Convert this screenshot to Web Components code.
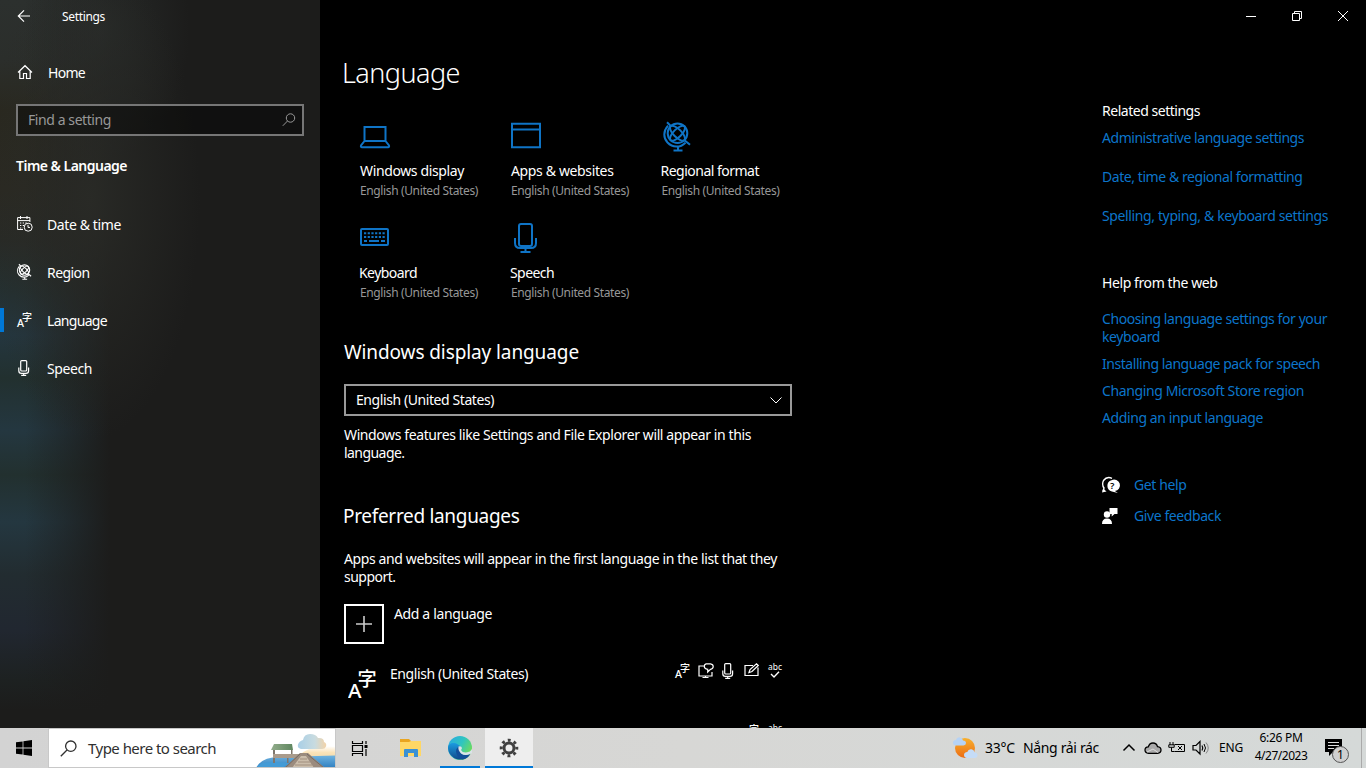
<!DOCTYPE html>
<html lang="en">
<head>
<meta charset="utf-8">
<title>Settings</title>
<style>
  html, body { margin: 0; height: 100%; overflow: hidden; background: #000; }
  body { font: 14px/18px "Noto Sans", "Liberation Sans", "Noto Sans CJK JP", sans-serif; color: #fff; }
</style>
</head>
<body>
<settings-desktop></settings-desktop>

<script>
const LANG = `<text x="0" y="15.2" font-size="10.5" font-weight="500" textLength="7" lengthAdjust="spacingAndGlyphs">A</text><text x="5" y="8.800" font-size="10" font-weight="500" font-family="Noto Sans CJK JP">字</text>`;
const MIC = `<rect x="4.5" y=".6" width="6" height="10.4" rx="1"/><path d="M2.6 7.5v3.2q0 2.6 2.6 2.6h4.6q2.6 0 2.6-2.6V7.5M7.5 13.3v2M5 15.3h5"/>`;
const GLOBE = `<circle cx="14.500" cy="11.500" r="9.800"/><g transform="rotate(45 14.500 11.500)"><ellipse cx="14.500" cy="11.500" rx="4" ry="9.800"/><ellipse cx="14.500" cy="11.500" rx="9.800" ry="4"/></g><path d="M4 .5l4 4M21.500 18.500l5.500 4.500M5 4C0 9.500 .3 16.500 4.500 20.800C9.500 26 17 26.500 22.500 21M15 25v3.500M10.500 28.800h9"/>`;

// name: [width, height, markup]
const ICONS = {
  back: [14, 14, `<path d="M13 7H1.500M7 1.300L1.300 7L7 12.700" stroke-width="1.200"/>`],
  home: [16, 16, `<path d="M1 8.500L8 1.700L15 8.500M2.800 7v7.500h3.700V9.500h3v5h3.700V7" stroke-width="1.200"/>`],
  search: [14, 14, `<circle cx="8.500" cy="5" r="4.200"/><path d="M5.500 8L.8 12.800"/>`],
  searchBig: [17, 17, `<circle cx="10.800" cy="6.200" r="5.200" stroke-width="1.300"/><path d="M7 10L.8 16.200" stroke-width="1.300"/>`],
  date: [16, 16, `<path d="M6 13.500H.6V1.600h12.300V6M.6 4.600h12.300M3.500 0v3M10 0v3"/><path d="M3 7h7.500M3 9.500h4M3 12h3" stroke-dasharray="1.300 1.400"/><circle cx="11.200" cy="11.200" r="4"/><path d="M11 8.800v2.600h2"/>`],
  region: [16, 16, `<g transform="translate(-.2 0) scale(.53)" stroke-width="2.200">${GLOBE}</g>`],
  lang: [16, 16, `<g fill="currentColor" stroke="none">${LANG}</g>`],
  mic: [16, 16, `<g transform="translate(-.8 0)" stroke-width="1.200">${MIC}</g>`],
  laptop: [30, 30, `<path d="M4.500 6h21v14h-21zM4.500 20L1 24.500q-.5 1.700 1 1.700h26q1.500 0 1-1.700L25.500 20" stroke-width="2"/>`],
  app: [30, 30, `<path d="M1 2.800h28v23.400H1zM1 8.500h28" stroke-width="2"/>`],
  globe: [30, 30, `<g transform="translate(1 .7)" stroke-width="2">${GLOBE}</g>`],
  keyboard: [30, 30, `<rect x="1" y="6" width="27" height="16" rx="1" stroke-width="2"/><path d="M4 10.300h21M4 14.100h21" stroke-width="2" stroke-dasharray="2.200 1.500"/><path d="M4 18h3M9 18h10M21 18h4" stroke-width="2"/>`],
  bigMic: [30, 31, `<rect x="8" y="1" width="13" height="22" rx="2" stroke-width="2"/><path d="M4 15v5q0 5 5 5h11q5 0 5-5v-5M14.500 25v4M9.500 29h10" stroke-width="2"/>`],
  chevron: [14, 14, `<path d="M1.500 4.500L7 10L12.500 4.500"/>`],
  plus: [18, 18, `<path d="M9 1v16M1 9h16" stroke-width="1.600" stroke="#ccc"/>`],
  display: [16, 16, `<path d="M6 3H1v10h13V9M4.500 14.500h6M7.500 13v2" stroke-width="1.200"/><path d="M8 .8h4.500q2.700.4 2.700 2.800t-2.700 2.800L9.700 9V6.400Q6.300 6 6.300 3.600T8 .8z" stroke-width="1.200"/>`],
  pen: [16, 16, `<path d="M9 2.500H1v10h13V4.500M5 9.500l1-3L12.500 .8l1.800 1.700L8 8.500z" stroke-width="1.200"/>`],
  abc: [16, 16, `<text x="1" y="6.800" font-size="9" textLength="14" lengthAdjust="spacingAndGlyphs" fill="currentColor" stroke="none">abc</text><path d="M4 11l3 3L12 8.800" stroke-width="1.400"/>`],
  help: [18, 18, `<path d="M1 15.500l1-3.500Q-.5 8.500 1.500 4.500Q4.800 0 10 2.300" stroke-width="1.400"/><path d="M9.500 4.200a5.800 5.800 0 1 1 3.400 10.900l3 2-6-1.700a5.800 5.800 0 0 1-.4-11.200z" fill="currentColor" stroke="none"/><path d="M1.200 12.500L0 16.400l4.500-1z" fill="currentColor" stroke="none"/><text x="8" y="12.800" font-size="9.500" font-weight="600" fill="#000" stroke="none">?</text>`],
  feedback: [18, 18, `<g fill="currentColor" stroke="none"><circle cx="5" cy="7.500" r="3.200"/><path d="M0 17q0-5.500 5-5.500t5 5.500zM7.500 1h8v6h-3l-2.800 2.600V7h-2.200z"/></g>`],
  min: [12, 12, `<path d="M1 6.500h10"/>`],
  restore: [12, 12, `<path d="M1.500 3.500h7v7h-7zM3.500 3.500v-2h7v7h-2"/>`],
  close: [12, 12, `<path d="M1 1l10 10M11 1L1 11"/>`],
  start: [16, 16, `<path d="M0 2.300L6.600 1.400V7.600H0zM7.400 1.200L16 0V7.600H7.400zM0 8.400H6.600V14.600L0 13.700zM7.400 8.400H16V16L7.400 14.800z" fill="#000" stroke="none"/>`],
  taskview: [17, 17, `<path d="M1.500 1v2.500h10V1M1.500 16v-2.500h10V16M1.500 5.500h10v6h-10zM15 1v3M15 9v7" stroke-width="1.200"/><path d="M13.500 5h3v3h-3z" fill="#000" stroke="none"/>`],
  folder: [22, 20, `<g stroke="none"><path d="M0 1h9l2 2h10v15H0z" fill="#e9a520"/><path d="M0 4h9l2-1h10v15H0z" fill="#ffd765"/><path d="M4 19v-7q0-1 1-1h12q1 0 1 1v7h-4v-4H8v4z" fill="#3b91d4"/></g>`],
  edge: [24, 24, `<defs><linearGradient id="e1" x2="1" y2=".6"><stop stop-color="#2aa7e4"/><stop offset=".55" stop-color="#2fc5c0"/><stop offset="1" stop-color="#70dd55"/></linearGradient><linearGradient id="e2" x2="0" y2="1"><stop stop-color="#1b9be0"/><stop offset="1" stop-color="#114a8b"/></linearGradient></defs><g stroke="none"><circle cx="12" cy="12" r="12" fill="url(#e1)"/><path d="M0 12C.5 6.500 6 6 10 8.500Q14 11 13 13c-3 .5-1.500 6 4 6q3 0 5.300-1.300A12 12 0 0 1 0 12z" fill="url(#e2)"/><path d="M12.500 10.500Q8 11 8 15.500q.5 6.500 7 8Q20 22.500 22.400 17.800q-5 2.500-8.500 0T12.500 10.500z" fill="#124f99"/><path d="M10.500 10.500q3-1.200 3.400 1.500.1 1-.9 2 1.300 2.700 5 2.500 4.500-.5 6-3.500v4l-1.700 1q-5.500 2.500-9.300-.6-3.200-3-2.500-6.900z" fill="#d9e4e8"/></g>`],
  gear: [20, 20, `<circle cx="10" cy="10" r="5" stroke-width="3"/><circle cx="10" cy="10" r="7.800" stroke-width="3" stroke-dasharray="2.900 3.226" stroke-dashoffset="1.450"/>`],
  weather: [26, 24, `<defs><linearGradient id="w1" x2="0" y2="1"><stop stop-color="#f8b02c"/><stop offset="1" stop-color="#ec6c14"/></linearGradient></defs><g stroke="none"><circle cx="12" cy="12" r="10" fill="url(#w1)"/><path d="M3 9.500q-3 0-3-2.700T3 4Q4 .8 7.200 1.500 9.500 2 10 4.500q3 .1 3 2.500T10.500 9.500z" fill="#b6d3f5"/><path d="M14 22q-3-.4-3-3t3.300-3q1-3.200 4.200-2.700 2.700.5 3 3.200 3 .3 3 2.800T21.500 22z" fill="#c5dcf7"/></g>`],
  up: [14, 14, `<path d="M1.500 9.500L7 4L12.500 9.500" stroke-width="1.500"/>`],
  cloud: [18, 14, `<path d="M4.500 12.300Q1 12 1 9t3.300-3.200Q5.500 2 9 2t4.500 3.600Q17 6 17 9t-3.400 3.300z" fill="#aaa" stroke-width="1.300"/><path d="M3 11l6-3 5 3.500" fill="none" stroke="#ddd"/>`],
  battery: [18, 16, `<path d="M6.500 4.500h10v7h-10M10 6l4 4M14 6l-4 4M2 2v3M5 2v3M.8 4.800h5.400v2.500H.8zM3.500 7.500v4h3" />`],
  sound: [18, 16, `<path d="M1 5.500h3l4-4v12.500l-4-4H1zM10 5.500q1.500 2.300 0 5" stroke-width="1.200"/><path d="M12 4q3 4 0 8" /><path d="M14 2.500q4.500 5.500 0 11" stroke="#888"/>`],
  notice: [26, 26, `<path d="M1 1h17v13H9l-4 4v-4H1z" fill="#000" stroke="none"/><path d="M4 4.500h11M4 7.500h11M4 10.500h6" stroke="#ddd"/><circle cx="16.500" cy="16.500" r="8" fill="#cfcfcf" stroke="#555"/><text x="16.500" y="20.700" text-anchor="middle" font-size="12" fill="#000" stroke="none">1</text>`],
  pier: [80, 38, `<defs><linearGradient id="p1" x2="0" y2="1"><stop stop-color="#fff"/><stop offset=".5" stop-color="#fbe3b8"/><stop offset="1" stop-color="#f3d9a8"/></linearGradient><linearGradient id="p2" x2="0" y2="1"><stop stop-color="#6fb3e0"/><stop offset="1" stop-color="#2f7fc0"/></linearGradient><linearGradient id="p3" x2="1"><stop stop-color="#a9cfe6"/><stop offset=".6" stop-color="#c8dbe0"/><stop offset="1" stop-color="#f3d3a8"/></linearGradient><linearGradient id="p4" x2="1"><stop stop-color="#92ac8b"/><stop offset="1" stop-color="#5f8760"/></linearGradient></defs><g stroke="none"><path d="M43 26q12-13 37-9v12H43z" fill="url(#p1)"/><path d="M0 38q6-12 26-11l54-1.500V38z" fill="url(#p2)"/><path d="M0 38q5-7 18-6l15 1-6 5z" fill="#439bd6"/><path d="M45 19q-4-1-3-4.500Q43 11 47 10q1-6 7-6t8 4q6-.5 6 4 3 1 2 4.500-1 2.500-4 2.500z" fill="url(#p3)"/><path d="M18 14h18l1 6H15z" fill="url(#p4)"/><path d="M17 20h2v13h-2zM35 20h1.500v5H35zM31 28h1.500v5H31z" fill="#7e766d"/><path d="M17 24h31v4H17z" fill="#a99b8c"/><path d="M44 23h8l17 15H28z" fill="#9b8b7e"/><path d="M45 26h5l8 12H36z" fill="#cbbdab"/></g><path d="M44 29h7M42 32h12M39 35h17" stroke="#a18f7e"/><path d="M44 24L29 38M51 24l17 14" stroke="#756b64"/>`],
};

class UiIcon extends HTMLElement {
  connectedCallback() {
    const [w, h, body] = ICONS[this.getAttribute('name')];
    this.attachShadow({ mode: 'open' }).innerHTML = `
      <style>
        :host { display: block; flex: none; width: ${w}px; height: ${h}px; }
        svg { display: block; overflow: visible; }
      </style>
      <svg width="${w}" height="${h}" viewBox="0 0 ${w} ${h}" fill="none" stroke="currentColor">${body}</svg>`;
  }
}
customElements.define('ui-icon', UiIcon);

// One line of text whose tracking is adjusted to fill the width in "w"
class FitText extends HTMLElement {
  connectedCallback() {
    this.attachShadow({ mode: 'open' }).innerHTML = `
      <style>
        :host { display: block; flex: none; white-space: nowrap; width: max-content; }
      </style>
      <span><slot></slot></span>`;
    const span = this.shadowRoot.querySelector('span');
    const gap = Number(this.getAttribute('w')) - span.getBoundingClientRect().width;
    span.style.letterSpacing = (gap / this.textContent.length).toFixed(3) + 'px';
  }
}
customElements.define('fit-text', FitText);

class NavItem extends HTMLElement {
  connectedCallback() {
    this.attachShadow({ mode: 'open' }).innerHTML = `
      <style>
        :host { display: flex; align-items: center; height: 48px; }
        i { width: 4px; height: 24px; margin: -2px 13px 0 0; }
        :host([selected]) i { background: #0078d7; }
        ui-icon { margin: -2px 14px 0 0; }
        :host([name="home"]) ui-icon { margin-right: 15px; }
      </style>
      <i></i><ui-icon name="${this.getAttribute('name')}"></ui-icon>
      <fit-text w="${this.getAttribute('w')}">${this.textContent}</fit-text>`;
  }
}
customElements.define('nav-item', NavItem);

class SideBar extends HTMLElement {
  connectedCallback() {
    this.attachShadow({ mode: 'open' }).innerHTML = `
      <style>
        :host {
          display: block; flex: none; width: 320px; height: 728px;
          background:
            radial-gradient(ellipse 110px 240px at 90px 200px, rgba(42,43,39,.9), rgba(42,43,39,0)),
            radial-gradient(ellipse 90px 130px at 100px 30px, rgba(44,48,46,.7), rgba(44,48,46,0)),
            linear-gradient(90deg, rgba(28,28,27,0) 25px, rgba(28,28,27,.45) 65px, #1c1c1b 110px),
            linear-gradient(#2c302e 0, #2b2e2b 60px, #29281f 110px, #2a2922 190px, #282a26 240px, #243031 290px,
              #24363f 335px, #22302f 378px, #243740 430px, #22302f 475px, #243740 522px, #222c30 575px,
              #212730 630px, #1d2121 680px, #1c1c1b 710px);
        }
        header { display: flex; align-items: center; height: 33px; padding-left: 17px; font-size: 12px; gap: 31px; }
        header ui-icon { margin-top: -2px; }
        nav-item[name="home"] { margin-top: 16px; }
        .find {
          display: flex; align-items: center; justify-content: space-between;
          box-sizing: border-box; width: 288px; height: 32px; margin: 7px 0 0 16px; padding: 0 6px 1px 10px;
          border: 2px solid #767676; background: rgba(0,0,0,.4); color: #989898;
        }
        .find ui-icon { margin-top: 1px; }
        h2 { margin: 21px 0 26px 16px; font-size: 14px; line-height: 18px; font-weight: 600; }
      </style>
      <header><ui-icon name="back"></ui-icon><fit-text w="43">Settings</fit-text></header>
      <nav-item name="home" w="37">Home</nav-item>
      <div class="find"><fit-text w="83">Find a setting</fit-text><ui-icon name="search"></ui-icon></div>
      <h2><fit-text w="111">Time &amp; Language</fit-text></h2>
      <nav>
        <nav-item name="date" w="74">Date &amp; time</nav-item>
        <nav-item name="region" w="42.500">Region</nav-item>
        <nav-item name="lang" w="60" selected>Language</nav-item>
        <nav-item name="mic" w="45">Speech</nav-item>
      </nav>`;
  }
}
customElements.define('side-bar', SideBar);

class FeatureTile extends HTMLElement {
  connectedCallback() {
    this.attachShadow({ mode: 'open' }).innerHTML = `
      <style>
        :host { display: block; height: 102px; }
        ui-icon { color: #0f74c6; height: 31px; margin-bottom: 10px; }
        :host([nudge]) .title { margin-left: -1px; }
        .sub { margin-top: 2px; font-size: 12px; line-height: 17px; color: #979797; }
      </style>
      <ui-icon name="${this.getAttribute('icon')}"></ui-icon>
      <fit-text class="title" w="${this.getAttribute('w')}">${this.textContent}</fit-text>
      <fit-text class="sub" w="118">English (United States)</fit-text>`;
  }
}
customElements.define('feature-tile', FeatureTile);

class LanguagePage extends HTMLElement {
  connectedCallback() {
    this.attachShadow({ mode: 'open' }).innerHTML = `
      <style>
        :host { display: block; flex: none; width: 448px; height: 728px; margin-left: 22px; padding-left: 2px; overflow: hidden; }
        h1, h2 { margin: 0; font-weight: 400; }
        h1 { margin: 53px 0 0 -2px; font-size: 27px; line-height: 40px; font-weight: 340; height: 40px; }
        h2 { font-size: 19px; line-height: 26px; height: 26px; }
        .tiles { display: grid; grid-template-columns: 151px 150.500px 146px; margin: 28px 0 0 16px; height: 218px; align-content: start; }
        .select {
          display: flex; align-items: center; justify-content: space-between; box-sizing: border-box;
          height: 32px; margin: 19px 0 10px; padding: 0 7px 0 10px; border: 2px solid #999;
        }
        .second { margin: 41px 0 21px -1px; }
        .add { display: flex; gap: 10px; height: 40px; margin: 18px 0 20px; }
        .add span { box-sizing: border-box; width: 40px; height: 40px; border: 2px solid #fff; display: grid; place-items: center; }
        .add fit-text { margin-top: 1px; }
        .row { display: flex; height: 61px; }
        .row .glyph { width: 42px; }
        .row .glyph ui-icon { transform: scale(1.920); transform-origin: 0 0; margin: 5px 0 0 4px; }
        .row fit-text { margin-top: 1px; }
        .set { display: flex; gap: 7px; margin: -1px 0 0 auto; padding-right: 9px; }
      </style>
      <h1><fit-text w="118">Language</fit-text></h1>
      <div class="tiles">
        <feature-tile icon="laptop" w="104">Windows display</feature-tile>
        <feature-tile icon="app" w="102.500">Apps &amp; websites</feature-tile>
        <feature-tile icon="globe" w="98.500" nudge>Regional format</feature-tile>
        <feature-tile icon="keyboard" w="58" nudge>Keyboard</feature-tile>
        <feature-tile icon="bigMic" w="44" nudge>Speech</feature-tile>
      </div>
      <h2><fit-text w="235">Windows display language</fit-text></h2>
      <div class="select"><fit-text w="138">English (United States)</fit-text><ui-icon name="chevron"></ui-icon></div>
      <fit-text w="407">Windows features like Settings and File Explorer will appear in this</fit-text>
      <fit-text w="60.500">language.</fit-text>
      <h2 class="second"><fit-text w="176.500">Preferred languages</fit-text></h2>
      <fit-text w="433">Apps and websites will appear in the first language in the list that they</fit-text>
      <fit-text w="51.500">support.</fit-text>
      <div class="add"><span><ui-icon name="plus"></ui-icon></span><fit-text w="98">Add a language</fit-text></div>
      <div class="row">
        <div class="glyph"><ui-icon name="lang"></ui-icon></div>
        <fit-text style="margin-left: 4px" w="138">English (United States)</fit-text>
        <div class="set">
          <ui-icon name="lang"></ui-icon><ui-icon name="display"></ui-icon><ui-icon name="mic"></ui-icon><ui-icon name="pen"></ui-icon><ui-icon name="abc"></ui-icon>
        </div>
      </div>
      <div class="row"><div class="set"><ui-icon name="lang"></ui-icon><ui-icon name="abc"></ui-icon></div></div>`;
  }
}
customElements.define('language-page', LanguagePage);

class RelatedLinks extends HTMLElement {
  connectedCallback() {
    this.attachShadow({ mode: 'open' }).innerHTML = `
      <style>
        :host { display: block; flex: none; width: 264px; margin-left: auto; }
        .controls { display: flex; justify-content: flex-end; height: 102px; }
        .controls span { width: 46px; height: 32px; display: grid; place-items: center; }
        a { display: block; color: #0c75ca; margin-bottom: 9px; }
        .wide a { margin-bottom: 21px; }
        .head { margin-bottom: 9px; }
        .help { margin: 49px 0 18px; }
        .act { display: flex; align-items: center; gap: 14px; height: 31px; }
        .act a { margin: 0; }
      </style>
      <div class="controls"><span><ui-icon name="min"></ui-icon></span><span><ui-icon name="restore"></ui-icon></span><span><ui-icon name="close"></ui-icon></span></div>
      <fit-text class="head" w="98">Related settings</fit-text>
      <div class="wide">
        <a><fit-text w="202">Administrative language settings</fit-text></a>
        <a><fit-text w="200.500">Date, time &amp; regional formatting</fit-text></a>
        <a><fit-text w="226">Spelling, typing, &amp; keyboard settings</fit-text></a>
      </div>
      <fit-text class="help" w="115.500">Help from the web</fit-text>
      <a><fit-text w="225">Choosing language settings for your</fit-text><fit-text w="58">keyboard</fit-text></a>
      <a><fit-text w="218">Installing language pack for speech</fit-text></a>
      <a><fit-text w="202">Changing Microsoft Store region</fit-text></a>
      <a><fit-text w="161">Adding an input language</fit-text></a>
      <div class="act" style="margin-top: 42px"><ui-icon name="help"></ui-icon><a><fit-text w="52.500">Get help</fit-text></a></div>
      <div class="act"><ui-icon name="feedback"></ui-icon><a><fit-text w="87">Give feedback</fit-text></a></div>`;
  }
}
customElements.define('related-links', RelatedLinks);

class TaskBar extends HTMLElement {
  connectedCallback() {
    this.attachShadow({ mode: 'open' }).innerHTML = `
      <style>
        :host { display: flex; height: 40px; background: linear-gradient(90deg, #d3d3d3, #d7d7d5 50%, #d5d9d8); color: #000; }
        .start { width: 48px; display: grid; place-items: center; }
        .search {
          display: flex; align-items: center; box-sizing: border-box; width: 288px; height: 40px; overflow: hidden;
          border: 1px solid #c8c8c8; background: #fff; padding-left: 11px; font-size: 15px; color: #303030;
        }
        .search fit-text { margin: 0 0 0 11px; }
        .search ui-icon[name="pier"] { margin: 2px -1px 0 auto; }
        .app { display: grid; place-items: center; box-sizing: border-box; height: 40px; width: 48px; }
        .run { width: 40px; margin: 0 5px 0 6px; border-bottom: 2px solid #0078d7; padding-top: 2px; }
        .active { background: #eee; border-bottom: 2px solid #0078d7; color: #404040; padding-top: 2px; }
        .tray { display: flex; align-items: center; margin-left: auto; }
        .clock { font-size: 12px; line-height: 18px; display: grid; justify-items: center; width: 54px; margin: -3px 1px 0 11px; }
        .peek { height: 40px; width: 4px; border-left: 1px solid #aaa; margin-left: 11px; }
      </style>
      <div class="start"><ui-icon name="start"></ui-icon></div>
      <div class="search"><ui-icon name="searchBig"></ui-icon><fit-text w="128">Type here to search</fit-text><ui-icon name="pier"></ui-icon></div>
      <div class="app" style="padding-right: 2px"><ui-icon name="taskview"></ui-icon></div>
      <div class="app" style="width: 50px; padding-left: 4px"><ui-icon name="folder"></ui-icon></div>
      <div class="app run"><ui-icon name="edge"></ui-icon></div>
      <div class="app active"><ui-icon name="gear"></ui-icon></div>
      <div class="tray">
        <ui-icon name="weather"></ui-icon>
        <fit-text style="margin-left: 6px" w="30">33°C</fit-text>
        <fit-text style="margin-left: 8px" w="76">Nắng rải rác</fit-text>
        <ui-icon style="margin-left: 23px" name="up"></ui-icon>
        <ui-icon style="margin-left: 8px" name="cloud"></ui-icon>
        <ui-icon style="margin-left: 6px" name="battery"></ui-icon>
        <ui-icon style="margin-left: 6px" name="sound"></ui-icon>
        <fit-text style="margin-left: 9px; font-size: 12px" w="24">ENG</fit-text>
        <div class="clock"><fit-text w="43">6:26 PM</fit-text><fit-text w="52.500">4/27/2023</fit-text></div>
        <ui-icon style="margin: 5px 0 0 15px" name="notice"></ui-icon>
        <div class="peek"></div>
      </div>`;
  }
}
customElements.define('task-bar', TaskBar);

class SettingsDesktop extends HTMLElement {
  connectedCallback() {
    this.attachShadow({ mode: 'open' }).innerHTML = `
      <style>
        :host { display: block; width: 1366px; height: 768px; overflow: hidden; background: #000; }
        main { display: flex; height: 728px; }
      </style>
      <main><side-bar></side-bar><language-page></language-page><related-links></related-links></main>
      <task-bar></task-bar>`;
  }
}
customElements.define('settings-desktop', SettingsDesktop);
</script>
</body>
</html>
